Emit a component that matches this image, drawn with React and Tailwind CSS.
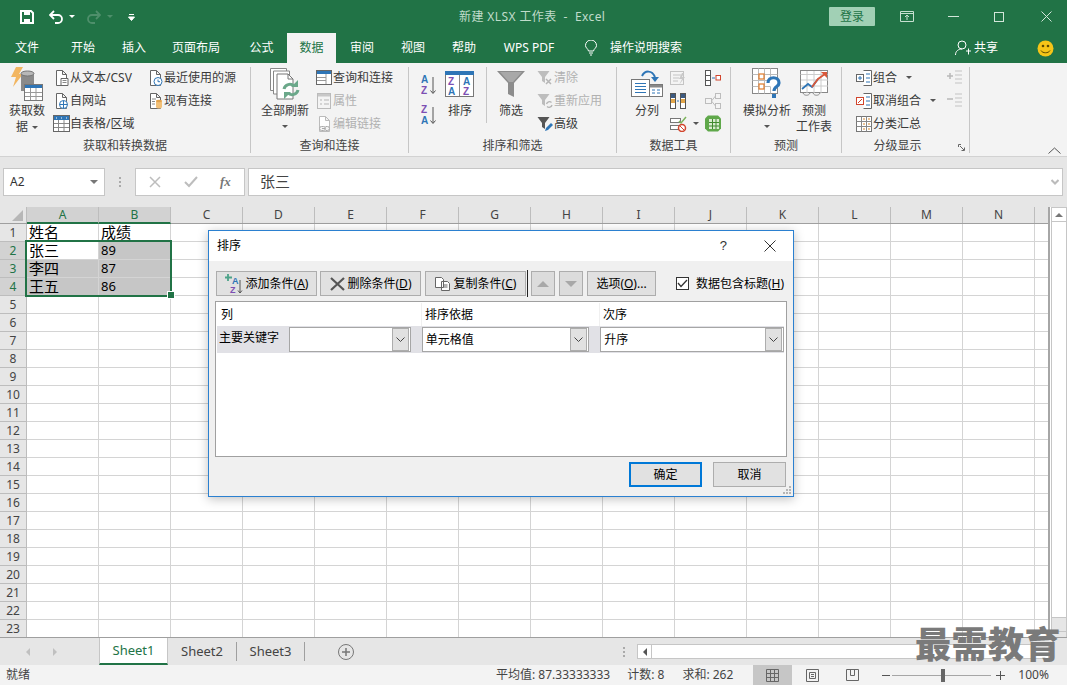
import React from 'react';

const cols = ['A', 'B', 'C', 'D', 'E', 'F', 'G', 'H', 'I', 'J', 'K', 'L', 'M', 'N'];
const rows = Array.from({ length: 23 }, (_, i) => i + 1);
const cellData = { '1A': '姓名', '1B': '成绩', '2A': '张三', '2B': '89', '3A': '李四', '3B': '87', '4A': '王五', '4B': '86' };

const Ico = ({ w = 16, h = 16, className = '', children }) => (
    <svg width={w} height={h} viewBox={`0 0 ${w} ${h}`} fill="none" className={`shrink-0 ${className}`}>{children}</svg>
);

// small ribbon caret
const Caret = ({ className = 'border-t-[#555]' }) => <span className={`inline-block w-0 h-0 border-x-[3px] border-x-transparent border-t-[3px] ${className}`} />;

const PageBase = ({ c = '#666' }) => <path d="M3.5 .5h6l4 4v11h-10z M9.5 .5v4h4" stroke={c} fill="#fff" />;

const IcoText = () => <Ico><PageBase /><path d="M8 8.5h7v7H8z" fill="#fff" stroke="#666" /><path d="M9.5 10.5h4M9.5 12.5h4" stroke="#888" /></Ico>;
const IcoWeb = () => <Ico><PageBase /><circle cx="10.5" cy="11.5" r="4" fill="#fff" stroke="#2e75b6" /><path d="M6.5 11.5h8M10.5 7.5v8" stroke="#2e75b6" /></Ico>;
const IcoTable = () => <Ico w={17} h={17}><rect x=".5" y=".5" width="16" height="16" fill="#fff" stroke="#666" /><rect x="1" y="1" width="15" height="4" fill="#2e75b6" /><path d="M1 8.5h15M1 12.5h15M5.5 5v11M11 5v11" stroke="#888" /><path d="M3 3h1M8 3h1M13 3h1" stroke="#fff" /></Ico>;
const IcoRecent = () => <Ico><PageBase /><circle cx="11" cy="11.5" r="4" fill="#fff" stroke="#2e75b6" /><path d="M11 9.5v2.2h2" stroke="#2e75b6" /></Ico>;
const IcoExisting = () => <Ico><PageBase /><path d="M5 6h4M5 8.500h3M5 11h3" stroke="#888" /><rect x="9" y="7" width="6" height="8.500" rx="2" fill="#f2c078" /><ellipse cx="12" cy="8" rx="3" ry="1.200" fill="#e2a24c" /></Ico>;
const IcoQuery = () => <Ico w={17} h={16}><rect x=".5" y=".5" width="15" height="14" fill="#fff" stroke="#666" /><rect x="1" y="1" width="14" height="3" fill="#2e75b6" /><path d="M1 7.500h9M1 10.500h9M10 4v10" stroke="#999" /></Ico>;
const IcoProps = () => <Ico><rect x="1.500" y=".5" width="13" height="15" fill="#f4f4f4" stroke="#bbb" /><rect x="2" y="1" width="12" height="2.500" fill="#c8c8c8" /><path d="M4 7h2M8 7h5M4 11h2M8 11h5" stroke="#b5b5b5" /></Ico>;
const IcoLink = () => <Ico><PageBase c="#bbb" /><path d="M6 12.500h3M5.500 10.500h2a2 2 0 010 4h-2a2 2 0 010-4zM9.500 10.500h2a2 2 0 010 4h-2" stroke="#aaa" fill="#f4f4f4" /></Ico>;
const IcoFunnel = ({ c = '#bdbdbd' }) => <path d="M.5 1h12L8 7v6L5 11V7z" fill={c} />;
const IcoClear = () => <Ico w={17}><IcoFunnel /><path d="M9 9l5 5M14 9l-5 5" stroke="#b5b5b5" strokeWidth="1.500" /></Ico>;
const IcoReapply = () => <Ico w={17}><IcoFunnel /><path d="M9.500 11a3 3 0 015-1.500M15 12a3 3 0 01-5 1.500" stroke="#b5b5b5" strokeWidth="1.300" /></Ico>;
const IcoAdvanced = () => <Ico w={17}><IcoFunnel c="#555" /><path d="M8 15l1-3 5-5 2 2-5 5z" fill="#2e75b6" /></Ico>;

const IcoData = () => (
    <svg width="34" height="34" viewBox="0 0 34 34" fill="none" className="shrink-0">
        <path d="M6 0h7L9 7h4L3 20l3-10H1z" fill="#f2b661" />
        <path d="M11 6.500c0-2.500 13-2.500 13 0V24H11z" fill="#8a8a8a" />
        <ellipse cx="17.500" cy="6.500" rx="6.500" ry="2.500" fill="#b8b8b8" stroke="#777" />
        <rect x="14.500" y="17.500" width="18" height="16" fill="#fff" stroke="#777" />
        <rect x="15" y="18" width="17" height="3" fill="#2e75b6" />
        <path d="M15 25.500h17M15 29.500h17M20.500 21v12M26 21v12" stroke="#999" />
    </svg>
);
const IcoRefresh = () => (
    <svg width="30" height="32" viewBox="0 0 30 32" fill="none" className="shrink-0">
        <path d="M.5 .5h16v22H.5z" fill="#fff" stroke="#888" />
        <path d="M3.500 3h16v23h-16z" fill="#fff" stroke="#888" />
        <path d="M7 6h11l5 5v20H7z" fill="#fff" stroke="#777" />
        <path d="M18 6v5h5" stroke="#777" />
        <path d="M14 21a6 6 0 0110-3M28 22a6 6 0 01-10 3" stroke="#6ba88a" strokeWidth="3" />
        <path d="M28 12v7h-7zM14 31v-7h7z" fill="#6ba88a" />
    </svg>
);
const AZ = ({ up }) => (
    <svg width="16" height="22" viewBox="0 0 16 22" fill="none" className="shrink-0">
        <text x="0" y="9" fontSize="10" fontWeight="700" fontFamily="Liberation Sans" fill={up ? '#2e75b6' : '#7d4fb3'}>{up ? 'A' : 'Z'}</text>
        <text x="0" y="20" fontSize="10" fontWeight="700" fontFamily="Liberation Sans" fill={up ? '#7d4fb3' : '#2e75b6'}>{up ? 'Z' : 'A'}</text>
        <path d="M12 3v16M9.500 16.500L12 19.500l2.500-3" stroke="#555" />
    </svg>
);
const IcoSort = () => (
    <svg width="30" height="26" viewBox="0 0 30 26" fill="none" className="shrink-0">
        <rect x=".5" y=".5" width="28" height="25" fill="#fff" stroke="#777" />
        <rect x="0" y="0" width="29" height="4" fill="#2e75b6" />
        <path d="M14.500 4v21" stroke="#888" />
        <text x="3" y="14" fontSize="10" fontWeight="700" fontFamily="Liberation Sans" fill="#7d4fb3">Z</text>
        <text x="3" y="24" fontSize="10" fontWeight="700" fontFamily="Liberation Sans" fill="#2e75b6">A</text>
        <text x="18" y="14" fontSize="10" fontWeight="700" fontFamily="Liberation Sans" fill="#2e75b6">A</text>
        <text x="18" y="24" fontSize="10" fontWeight="700" fontFamily="Liberation Sans" fill="#7d4fb3">Z</text>
    </svg>
);
const IcoFilter = () => (
    <svg width="28" height="26" viewBox="0 0 28 26" fill="none" className="shrink-0">
        <path d="M0 0h28L17 12v14l-6-3V12z" fill="#8c8c8c" />
        <path d="M3 1h22l-9 10h-4z" fill="#a8a8a8" />
    </svg>
);
const IcoColumns = () => (
    <svg width="32" height="27" viewBox="0 0 32 27" fill="none" className="shrink-0">
        <rect x=".5" y="9.500" width="18" height="17" fill="#fff" stroke="#777" />
        <path d="M4 13.500h11M4 16.500h11M4 19.500h11M4 22.500h11" stroke="#2e75b6" />
        <rect x="18.500" y="14.500" width="13" height="12" fill="#fff" stroke="#777" />
        <rect x="19" y="15" width="12" height="2.500" fill="#888" />
        <path d="M21 20h3M26 20h3M21 23h3M26 23h3" stroke="#2e75b6" />
        <path d="M11 6c3-6 10-6 13 1" stroke="#2e75b6" strokeWidth="2" />
        <path d="M20 7h8l-4 5z" fill="#2e75b6" />
    </svg>
);
const IcoFlash = () => <Ico><rect x=".5" y="1.500" width="13" height="13" fill="#f4f4f4" stroke="#c4c4c4" /><path d="M3 5h8M3 8h6M3 11h5" stroke="#c4c4c4" /><path d="M12 3l-3 6h3l-3 6 6-8h-3l2-4z" fill="#c8c8c8" /></Ico>;
const IcoRemoveDup = () => <Ico><rect x=".5" y=".5" width="5" height="15" fill="#fff" stroke="#555" /><rect x="1" y="1" width="4" height="4" fill="#3d5a80" /><rect x="1" y="6" width="4" height="4" fill="#e2a64a" /><rect x="10.500" y=".5" width="5" height="15" fill="#fff" stroke="#555" /><rect x="11" y="1" width="4" height="4" fill="#3d5a80" /><rect x="11" y="6" width="4" height="4" fill="#e2a64a" /><path d="M7 8h2" stroke="#2e75b6" /></Ico>;
const IcoValidate = () => <Ico w={17}><rect x=".5" y="2.500" width="10" height="4" fill="#fff" stroke="#777" /><rect x=".5" y="9.500" width="10" height="4" fill="#fff" stroke="#777" /><path d="M9 5l2 2 5-6" stroke="#7bb35b" strokeWidth="1.500" /><circle cx="12" cy="12" r="3.500" fill="#fff" stroke="#d1442c" strokeWidth="1.500" /><path d="M10 10l4 4" stroke="#d1442c" /></Ico>;
const IcoConsol = () => <Ico><rect x=".5" y=".5" width="5" height="15" fill="#fff" stroke="#555" /><path d="M1 5.500h4M1 10.500h4" stroke="#555" /><path d="M7 8h3" stroke="#2e75b6" /><rect x="11" y="5.500" width="4.500" height="4.500" fill="#fff" stroke="#d1442c" /></Ico>;
const IcoRelation = () => <Ico><rect x=".5" y="5.500" width="6" height="5" fill="#f4f4f4" stroke="#bdbdbd" /><rect x="10.500" y=".5" width="5" height="5" fill="#f4f4f4" stroke="#bdbdbd" /><rect x="10.500" y="10.500" width="5" height="5" fill="#f4f4f4" stroke="#bdbdbd" /><path d="M6.500 8l4-5M6.500 8l4 5" stroke="#bdbdbd" /></Ico>;
const IcoPivot = () => <Ico h={17}><path d="M3 .5h10l3 3v10l-3 3H3l-3-3v-10z" fill="#5fa84a" /><rect x="4" y="4" width="10" height="10" fill="#d9ecd0" /><path d="M7.500 4v10M11 4v10M4 7.500h10M4 11h10" stroke="#3f8a2e" /></Ico>;
const IcoWhatIf = () => (
    <svg width="31" height="31" viewBox="0 0 31 31" fill="none" className="shrink-0">
        <rect x=".5" y=".5" width="25" height="25" fill="#fff" stroke="#888" />
        <path d="M.5 6.500h25M.5 12.500h25M.5 18.500h25M6.500 .5v25M12.500 .5v25M18.500 .5v25" stroke="#bbb" />
        <rect x="7" y="6" width="5" height="5" fill="#fff" stroke="#e07b2a" strokeWidth="1.200" />
        <rect x="7" y="16" width="5" height="5" fill="#fff" stroke="#e07b2a" strokeWidth="1.200" />
        <path d="M16 15c0-7 11-7 11 0 0 4-5 3-5 8" stroke="#2e75b6" strokeWidth="3.200" fill="#fff" />
        <rect x="20" y="26" width="4" height="4" fill="#2e75b6" />
    </svg>
);
const IcoForecast = () => (
    <svg width="29" height="27" viewBox="0 0 29 27" fill="none" className="shrink-0">
        <rect x=".5" y=".5" width="27" height="22" fill="#fff" stroke="#888" />
        <path d="M.5 4.500h27M7 1v22M14 1v22M21 1v22M1 10h27M1 16h27" stroke="#ccc" />
        <path d="M2 19l6-5 4 3 6-8" stroke="#2e75b6" strokeWidth="1.800" />
        <path d="M12 17l6-8 7-5" stroke="#d9583a" strokeWidth="1.800" />
        <path d="M21 2h6v6z" fill="#d9583a" />
        <path d="M3 23c1 3 6 3 7 0M13 23c1 3 6 3 7 0" stroke="#888" />
    </svg>
);
const IcoOutline = ({ red, sub }) => (
    <Ico w={17} h={16}>
        {sub ? (
            <>
                <rect x=".5" y=".5" width="15" height="15" fill="#fff" stroke="#777" />
                <path d="M5.500 .5v15M10.500 .5v15M.5 5.500h15M.5 10.500h15" stroke="#888" />
                <path d="M7 3h2M12 3h2M7 8h2M12 8h2M7 13h2M12 13h2" stroke="#d9882a" />
            </>
        ) : (
            <>
                <path d="M7.500 .5h8v15h-8" stroke="#666" fill="#fff" />
                <rect x=".5" y="4.500" width="7" height="7" fill="#fff" stroke={red ? '#d1442c' : '#666'} />
                <path d={red ? 'M2 10l4-4' : 'M2 8h4M4 6v4'} stroke={red ? '#d1442c' : '#2e75b6'} />
                <path d="M10 4h4M10 8h4M10 12h4" stroke="#2e75b6" />
            </>
        )}
    </Ico>
);
const IcoShow = ({ minus }) => (
    <Ico w={15}>
        <path d={minus ? 'M0 6h6' : 'M0 6h6M3 3v6'} stroke="#b9b9b9" strokeWidth="1.500" />
        <path d="M8 1h7M8 5h7M8 9h7M8 13h7" stroke="#c3c3c3" />
    </Ico>
);

// one small ribbon command
const Cmd = ({ icon, label, disabled, tail }) => (
    <div className={`flex items-center h-[23px] whitespace-nowrap ${disabled ? 'text-[#b1b1b1]' : 'text-[#3a3a3a]'}`}>
        <span className="w-[18px] flex justify-center">{icon}</span>
        {label && <span>{label}</span>}
        {tail}
    </div>
);

const Big = ({ icon, lines, caret, className = '' }) => (
    <div className={`flex flex-col items-center text-[#3a3a3a] whitespace-nowrap ${className}`}>
        <div className="h-[33px] flex items-center justify-center">{icon}</div>
        <div className="mt-[3px] leading-[16px] text-center">
            {lines.map((l, i) => <div key={i}>{l}</div>)}
            {caret && <div className="flex justify-center items-center h-[14px]"><Caret /></div>}
        </div>
    </div>
);

const Group = ({ width, label, children, extra }) => (
    <div className={`relative flex flex-col border-r border-[#c6c6c6] mt-[4px] mb-[3px] ${width}`}>
        <div className="flex h-[72px] shrink-0">{children}</div>
        <div className="h-[15px] shrink-0 mt-[-1px] flex items-center justify-center text-[#444]">{label}</div>
        {extra}
    </div>
);

const CmdCol = ({ className = '', children }) => <div className={`flex flex-col mt-[-1px] ${className}`}>{children}</div>;

const TitleBar = () => (
    <div className="relative flex items-center h-[33px] text-white">
        <div className="flex items-center pl-[20px]">
            <svg width="14" height="14" viewBox="0 0 14 14" fill="none">
                <path d="M1 1h10l2 2v10H1z" stroke="#fff" strokeWidth="2" />
                <path d="M4 1h6v4H4zM4 9h6v4H4z" fill="#fff" />
            </svg>
            <svg width="15" height="14" viewBox="0 0 15 14" fill="none" className="ml-[15px]">
                <path d="M1 5h8a4 4 0 010 8H6" stroke="#fff" strokeWidth="1.800" />
                <path d="M5 1L1 5l4 4" stroke="#fff" strokeWidth="1.800" />
            </svg>
            <Caret className="ml-[5px] border-t-white" />
            <svg width="15" height="14" viewBox="0 0 15 14" fill="none" className="ml-[11px]">
                <path d="M14 5H6a4 4 0 000 8h3M10 1l4 4-4 4" stroke="#4e8f6b" strokeWidth="1.800" />
            </svg>
            <Caret className="ml-[6px] border-t-[#4e8f6b]" />
            <svg width="7" height="8" viewBox="0 0 7 8" fill="none" className="ml-[15px]">
                <path d="M1 1.500h5M.5 4h6L3.500 7.500z" stroke="#fff" strokeWidth="1" fill="#fff" />
            </svg>
        </div>
        <div className="absolute left-[459px] text-[12px] text-[#c0dccb] tracking-[.4px]">新建 XLSX 工作表&nbsp; -&nbsp; Excel</div>
        <div className="ml-auto flex items-center">
            <div className="w-[46px] h-[19px] flex items-center justify-center bg-[#a1d0b5] rounded-[1px] text-[#217346] text-[12px] mr-[25px]">登录</div>
            <svg width="14" height="11" viewBox="0 0 14 11" fill="none" className="mr-[34px]" stroke="#c7e0d1">
                <path d="M.5 .5h13v10H.5zM.5 2.500h13M7 9V4.500M5 6l2-2 2 2" />
            </svg>
            <div className="w-[11px] h-[1px] bg-[#d3e6da] mr-[35px]" />
            <div className="w-[10px] h-[10px] border border-[#d3e6da] mr-[37px]" />
            <svg width="11" height="11" viewBox="0 0 11 11" className="mr-[15px]" stroke="#d3e6da"><path d="M.5 .5l10 10M10.500 .5l-10 10" /></svg>
        </div>
    </div>
);

const tabs = [['文件', 54], ['开始', 58], ['插入', 44], ['页面布局', 80], ['公式', 51], ['数据', 49], ['审阅', 52], ['视图', 50], ['帮助', 52], ['WPS PDF', 78]];

const TabBar = () => (
    <div className="flex h-[30px] text-[12px] text-white">
        {tabs.map(([t, w]) => (
            <div key={t} style={{ width: w }} className={`flex items-center justify-center ${t === '数据' ? 'bg-[#f3f3f3] text-[#217346]' : ''}`}>{t}</div>
        ))}
        <div className="flex items-center ml-[17px]">
            <svg width="12" height="16" viewBox="0 0 12 16" fill="none" stroke="#fff"><path d="M3.500 11C3 8.500 .5 8 .5 5.500a5.500 5.500 0 0111 0C11.500 8 9 8.500 8.500 11zM4 13h4M5 15h2" /></svg>
            <span className="ml-[13px]">操作说明搜索</span>
        </div>
        <div className="ml-auto flex items-center">
            <svg width="16" height="16" viewBox="0 0 16 16" fill="none" stroke="#fff"><circle cx="7" cy="5" r="4" /><path d="M.5 15c0-4 3-6 6.500-6M11 11h5M13.500 8.500v6" /></svg>
            <span className="ml-[3px] mr-[39px]">共享</span>
            <svg width="17" height="17" viewBox="0 0 17 17" className="mr-[13px]"><circle cx="8.500" cy="8.500" r="8" fill="#f5c518" /><circle cx="6" cy="6" r="1.300" fill="#5a4a00" /><circle cx="11" cy="6" r="1.300" fill="#5a4a00" /><path d="M4 10.500c1.500 3 7.500 3 9 0" stroke="#5a4a00" fill="none" /></svg>
        </div>
    </div>
);

const Ribbon = () => (
    <div className="relative flex h-[94px] bg-[#f3f3f3] border-b border-[#d2d2d2] text-[12px]">
        <Group width="w-[251px]" label="获取和转换数据">
            <Big icon={<IcoData />} lines={['获取数', <span className="flex items-center justify-center gap-[4px]">据<Caret /></span>]} className="w-[52px] ml-[1px] mr-[-1px]" />
            <CmdCol className="w-[84px]">
                <Cmd icon={<IcoText />} label="从文本/CSV" />
                <Cmd icon={<IcoWeb />} label="自网站" />
                <Cmd icon={<IcoTable />} label="自表格/区域" />
            </CmdCol>
            <CmdCol className="ml-[10px]">
                <Cmd icon={<IcoRecent />} label="最近使用的源" />
                <Cmd icon={<IcoExisting />} label="现有连接" />
            </CmdCol>
        </Group>
        <Group width="w-[158px]" label="查询和连接">
            <Big icon={<IcoRefresh />} lines={['全部刷新']} caret className="w-[68px]" />
            <CmdCol className="ml-[-4px]">
                <Cmd icon={<IcoQuery />} label="查询和连接" />
                <Cmd icon={<IcoProps />} label="属性" disabled />
                <Cmd icon={<IcoLink />} label="编辑链接" disabled />
            </CmdCol>
        </Group>
        <Group width="w-[208px]" label="排序和筛选">
            <div className="flex flex-col gap-[8px] pl-[12px] pt-[7px]"><AZ up /><AZ /></div>
            <Big icon={<IcoSort />} lines={['排序']} className="w-[30px] ml-[8px]" />
            <div className="w-px h-[56px] bg-[#c6c6c6] ml-[11px]" />
            <Big icon={<IcoFilter />} lines={['筛选']} className="w-[28px] ml-[10px]" />
            <CmdCol className="ml-[11px]">
                <Cmd icon={<IcoClear />} label="清除" disabled />
                <Cmd icon={<IcoReapply />} label="重新应用" disabled />
                <Cmd icon={<IcoAdvanced />} label="高级" />
            </CmdCol>
        </Group>
        <Group width="w-[114px]" label="数据工具">
            <Big icon={<IcoColumns />} lines={['分列']} className="w-[32px] ml-[14px]" />
            <CmdCol className="ml-[6px] w-[35px]">
                <Cmd icon={<IcoFlash />} />
                <Cmd icon={<IcoRemoveDup />} />
                <Cmd icon={<IcoValidate />} tail={<Caret className="ml-[6px] border-t-[#555]" />} />
            </CmdCol>
            <CmdCol>
                <Cmd icon={<IcoConsol />} />
                <Cmd icon={<IcoRelation />} />
                <Cmd icon={<IcoPivot />} />
            </CmdCol>
        </Group>
        <Group width="w-[111px]" label="预测">
            <Big icon={<IcoWhatIf />} lines={['模拟分析']} caret className="w-[50px] ml-[11px]" />
            <Big icon={<IcoForecast />} lines={['预测', '工作表']} className="w-[36px] ml-[4px]" />
        </Group>
        <Group
            width="w-[128px]"
            label={<span className="mr-[16px]">分级显示</span>}
            extra={(
                <svg width="7" height="7" viewBox="0 0 7 7" className="absolute right-[4px] bottom-[2px]" fill="none" stroke="#666">
                    <path d="M.5 3V.5H3M2 2l4 4M6.500 3.500v3h-3" />
                </svg>
            )}
        >
            <CmdCol className="pl-[13px] w-[103px]">
                <Cmd icon={<IcoOutline />} label="组合" tail={<Caret className="ml-[9px] border-t-[#555]" />} />
                <Cmd icon={<IcoOutline red />} label="取消组合" tail={<Caret className="ml-[9px] border-t-[#555]" />} />
                <Cmd icon={<IcoOutline sub />} label="分类汇总" />
            </CmdCol>
            <CmdCol>
                <Cmd icon={<IcoShow />} />
                <Cmd icon={<IcoShow minus />} />
            </CmdCol>
        </Group>
        <svg width="13" height="7" viewBox="0 0 13 7" fill="none" stroke="#555" className="absolute right-[6px] bottom-[2px]"><path d="M.5 6.500l6-5.500 6 5.500" /></svg>
    </div>
);

const FormulaBar = () => (
    <div className="flex items-center h-[28px] mt-[11px] mb-[11px] pl-[3px] pr-[4px]">
        <div className="w-[102px] h-full bg-white border border-[#c6c6c6] flex items-center justify-between pl-[6px] pr-[6px] text-[12px] text-[#333]">
            A2
            <span className="w-0 h-0 border-x-[4px] border-x-transparent border-t-[4px] border-t-[#777]" />
        </div>
        <div className="w-[30px] flex flex-col items-center gap-[2px]">
            <span className="w-[2px] h-[2px] bg-[#aaa]" /><span className="w-[2px] h-[2px] bg-[#aaa]" /><span className="w-[2px] h-[2px] bg-[#aaa]" />
        </div>
        <div className="w-[110px] h-full bg-white border border-[#c6c6c6] flex items-center pl-[13px]">
            <svg width="12" height="12" viewBox="0 0 12 12" stroke="#bdbdbd" strokeWidth="1.500"><path d="M1 1l10 10M11 1L1 11" /></svg>
            <svg width="14" height="12" viewBox="0 0 14 12" stroke="#bdbdbd" strokeWidth="2" fill="none" className="ml-[23px]"><path d="M1 6l4 4 8-9" /></svg>
            <span className="ml-[22px] font-['Liberation_Serif',serif] italic font-bold text-[13px] text-[#777]">fx</span>
        </div>
        <div className="ml-[3px] flex-1 h-full bg-white border border-[#c6c6c6] flex items-center justify-between pl-[11px] pr-[3px] text-[15px] text-[#444]">
            <span className="mt-[-2px]">张三</span>
            <svg width="8" height="6" viewBox="0 0 8 6" fill="none" stroke="#bbb" strokeWidth="2"><path d="M.5 1L4 4.500 7.500 1" /></svg>
        </div>
    </div>
);

const isSel = (r, c) => r >= 2 && r <= 4 && (c === 'A' || c === 'B');

const Sheet = () => (
    <div className="relative flex h-[430px] bg-white">
        <div className="w-[1048px]">
            <div className="flex h-[17px] bg-[#e6e6e6] border-b border-[#9f9f9f] text-[12px] text-[#444]">
                <div className="relative w-[27px] border-r border-[#bdbdbd]">
                    <span className="absolute right-[3px] bottom-[2px] w-0 h-0 border-l-[11px] border-l-transparent border-b-[11px] border-b-[#b7b7b7]" />
                </div>
                {cols.map((c) => (
                    <div key={c} className={`w-[72px] flex items-center justify-center border-r border-[#bdbdbd] ${c === 'A' || c === 'B' ? 'bg-[#d2d2d2] text-[#217346] border-b-2 border-b-[#217346] h-[17px]' : ''}`}>{c}</div>
                ))}
            </div>
            {rows.map((r) => (
                <div key={r} className="flex h-[18px]">
                    <div className={`w-[27px] flex items-center justify-center border-r border-b border-[#bdbdbd] text-[12px] ${r >= 2 && r <= 4 ? 'bg-[#d2d2d2] text-[#217346]' : 'bg-[#e6e6e6] text-[#444]'}`}>{r}</div>
                    {cols.map((c) => {
                        const v = cellData[`${r}${c}`];
                        return (
                            <div
                                key={c}
                                className={`w-[72px] pl-[2px] flex items-center border-r border-b border-[#d4d4d4] text-black leading-[17px] ${/\d/.test(v || '') ? 'text-[13px]' : 'text-[15px]'} ${isSel(r, c) && !(r === 2 && c === 'A') ? 'bg-[#c6c6c6]' : ''}`}
                            >
                                {v}
                            </div>
                        );
                    })}
                    <div className="flex-1 border-b border-[#d4d4d4]" />
                </div>
            ))}
            <div className="absolute left-[25px] top-[33px] w-[147px] h-[57px] border-2 border-[#217346]" />
            <div className="absolute left-[167px] top-[84px] w-[6px] h-[6px] bg-[#217346] border border-white box-content" />
        </div>
        <div className="w-[2px] bg-[#a6a6a6]" />
        <div className="ml-[1px] w-[16px] bg-[#e6e6e6] flex flex-col items-center border-x border-[#c6c6c6]">
            <div className="w-full h-[15px] bg-white border-y border-[#c6c6c6] flex items-center justify-center">
                <span className="w-0 h-0 border-x-[4px] border-x-transparent border-b-[4px] border-b-[#777]" />
            </div>
            <div className="w-full h-[395px] bg-white" />
            <div className="w-full h-[15px] bg-[#e6e6e6] border-y border-[#c6c6c6]" />
        </div>
    </div>
);

const DlgBtn = ({ className = 'bg-[#e1e1e1] border border-[#adadad]', width = '', children }) => (
    <div className={`h-[25px] flex items-center justify-center whitespace-nowrap ${width} ${className}`}>{children}</div>
);

const Combo = ({ className = '', value }) => (
    <div className={`h-[25px] bg-white border border-[#a6a6a6] flex items-center pl-[3px] text-[12px] text-black ${className}`}>
        {value}
        <span className="ml-auto w-[17px] h-[23px] bg-[#e1e1e1] border border-[#adadad] flex items-center justify-center mr-[1px]">
            <svg width="9" height="5" viewBox="0 0 9 5" fill="none" stroke="#444"><path d="M.5 .5l4 4 4-4" /></svg>
        </span>
    </div>
);

const SortDialog = () => (
    <div className="absolute left-[208px] top-[230px] w-[586px] h-[267px] border border-[#2b80d0] bg-[#f0f0f0] text-[12px] text-black shadow-[0_2px_10px_rgba(0,0,0,0.25)]">
        <div className="h-[30px] bg-white flex items-center pl-[8px]">
            排序
            <span className="ml-auto mr-[37px] font-['Liberation_Sans',sans-serif] text-[13px] text-[#333]">?</span>
            <svg width="12" height="12" viewBox="0 0 12 12" stroke="#333" className="mr-[17px]"><path d="M.5 .5l11 11M11.500 .5l-11 11" /></svg>
        </div>
        <div className="flex items-center h-[25px] mt-[10px] pl-[7px]">
            <DlgBtn width="w-[101px]">
                <svg width="20" height="20" viewBox="0 0 20 20" fill="none" className="mr-[1px]">
                    <path d="M3 0v7M0 3.500h7" stroke="#4da389" strokeWidth="1.800" />
                    <text x="7" y="10" fontSize="9" fontWeight="700" fontFamily="Liberation Sans" fill="#2e75b6">A</text>
                    <text x="5" y="19" fontSize="9" fontWeight="700" fontFamily="Liberation Sans" fill="#7d4fb3">Z</text>
                    <path d="M15 6v13M13 16.500l2 2.500 2-2.500" stroke="#555" />
                </svg>
                添加条件(<u>A</u>)
            </DlgBtn>
            <div className="ml-[3px]">
                <DlgBtn width="w-[101px]">
                    <svg width="15" height="14" viewBox="0 0 15 14" stroke="#555" strokeWidth="2.200" className="mr-[3px]"><path d="M1 1l13 12M14 1L1 13" /></svg>
                    删除条件(<u>D</u>)
                </DlgBtn>
            </div>
            <div className="ml-[4px]">
                <DlgBtn width="w-[101px]">
                    <svg width="16" height="14" viewBox="0 0 16 14" fill="#fff" stroke="#666" className="mr-[3px]"><path d="M.5 .5h6l2 2v8h-8z M6.500 4.500h6l2 2v7h-8z" /><path d="M8.500 8h4M8.500 10h4" /></svg>
                    复制条件(<u>C</u>)
                </DlgBtn>
            </div>
            <div className="w-px h-[27px] bg-[#222] ml-[1px]" />
            <div className="ml-[3px]">
                <DlgBtn width="w-[24px]" className="bg-[#dcdcdc] border border-[#adadad]"><span className="w-0 h-0 border-x-[6px] border-x-transparent border-b-[6px] border-b-[#a8a8a8]" /></DlgBtn>
            </div>
            <div className="ml-[4px]">
                <DlgBtn width="w-[24px]" className="bg-[#dcdcdc] border border-[#adadad]"><span className="w-0 h-0 border-x-[6px] border-x-transparent border-t-[6px] border-t-[#a8a8a8]" /></DlgBtn>
            </div>
            <div className="ml-[4px]">
                <DlgBtn width="w-[69px]">选项(<u>O</u>)...</DlgBtn>
            </div>
            <div className="flex items-center ml-[20px]">
                <span className="w-[13px] h-[13px] bg-white border border-[#333] flex items-center justify-center">
                    <svg width="11" height="9" viewBox="0 0 11 9" fill="none" stroke="#333" strokeWidth="1.300"><path d="M1 4l3 3.500L10 1" /></svg>
                </span>
                <span className="ml-[7px] whitespace-nowrap">数据包含标题(<u>H</u>)</span>
            </div>
        </div>
        <div className="mt-[5px] mx-[6px] h-[156px] bg-white border border-[#a0a0a0] pt-[1px] px-[1px]">
            <div className="flex h-[23px] items-center">
                <div className="w-[205px] pl-[4px] border-r border-[#f0f0f0] h-full flex items-center">列</div>
                <div className="w-[178px] pl-[3px] border-r border-[#f0f0f0] h-full flex items-center">排序依据</div>
                <div className="pl-[3px]">次序</div>
            </div>
            <div className="flex h-[27px] items-center bg-[#e1e1e6] pl-[2px] mr-[1px]">
                <span className="w-[70px] mb-[3px] whitespace-nowrap">主要关键字</span>
                <Combo className="w-[122px]" />
                <Combo className="w-[168px] ml-[11px]" value="单元格值" />
                <Combo className="w-[184px] ml-[11px]" value="升序" />
            </div>
        </div>
        <div className="flex justify-end mt-[5px] pr-[7px]">
            <DlgBtn width="w-[73px]" className="bg-[#e1e1e1] border-2 border-[#0078d7]">确定</DlgBtn>
            <div className="ml-[11px]">
                <DlgBtn width="w-[73px]">取消</DlgBtn>
            </div>
        </div>
        <svg width="9" height="9" viewBox="0 0 9 9" className="absolute right-[1px] bottom-[1px]" fill="#b5b5b5">
            <rect x="6" y="0" width="2" height="2" /><rect x="3" y="3" width="2" height="2" /><rect x="6" y="3" width="2" height="2" />
            <rect x="0" y="6" width="2" height="2" /><rect x="3" y="6" width="2" height="2" /><rect x="6" y="6" width="2" height="2" />
        </svg>
    </div>
);

const SheetTabs = () => (
    <div className="relative flex items-center h-[28px] bg-[#e6e6e6] border-t border-[#9f9f9f] text-[13px] text-[#444]">
        <div className="w-[99px] flex items-center pl-[26px] gap-[23px]">
            <span className="w-0 h-0 border-y-[4px] border-y-transparent border-r-[4px] border-r-[#c0c0c0]" />
            <span className="w-0 h-0 border-y-[4px] border-y-transparent border-l-[4px] border-l-[#c0c0c0]" />
        </div>
        <div className="w-[69px] h-full flex items-center justify-center bg-white text-[#217346] border-b-2 border-b-[#217346] border-x border-x-[#c6c6c6]">Sheet1</div>
        <div className="w-[69px] h-[19px] flex items-center justify-center border-r border-[#9f9f9f]">Sheet2</div>
        <div className="w-[68px] h-[19px] flex items-center justify-center border-r border-[#9f9f9f]">Sheet3</div>
        <svg width="16" height="16" viewBox="0 0 16 16" fill="none" stroke="#777" className="ml-[33px]"><circle cx="8" cy="8" r="7.500" /><path d="M4 8h8M8 4v8" strokeWidth="1.500" /></svg>
        <div className="ml-[269px] flex flex-col gap-[2px]">
            <span className="w-[2px] h-[2px] bg-[#aaa]" /><span className="w-[2px] h-[2px] bg-[#aaa]" /><span className="w-[2px] h-[2px] bg-[#aaa]" />
        </div>
        <div className="ml-[12px] w-[412px] h-[15px] bg-white border border-[#c6c6c6] flex items-center">
            <div className="w-[14px] h-full border-r border-[#c6c6c6] flex items-center justify-center">
                <span className="w-0 h-0 border-y-[4px] border-y-transparent border-r-[4px] border-r-[#555]" />
            </div>
        </div>
    </div>
);

const StatusBar = () => (
    <div className="flex items-center h-[20px] bg-[#f3f3f3] text-[12px] text-[#444]">
        <span className="ml-[6px]">就绪</span>
        <span className="ml-[466px]">平均值: 87.33333333</span>
        <span className="ml-[17px]">计数: 8</span>
        <span className="ml-[18px]">求和: 262</span>
        <div className="ml-[20px] w-[39px] h-full bg-[#c6c6c6] flex items-center justify-center">
            <svg width="13" height="13" viewBox="0 0 13 13" fill="none" stroke="#666"><path d="M.5 .5h12v12H.5zM4.500 .5v12M8.500 .5v12M.5 4.500h12M.5 8.500h12" /></svg>
        </div>
        <div className="w-[40px] flex justify-center">
            <svg width="13" height="13" viewBox="0 0 13 13" fill="none" stroke="#666"><path d="M.5 .5h12v12H.5zM3.500 3.500h6v6h-6zM5 5.500h3M5 7.500h3" /></svg>
        </div>
        <div className="w-[40px] flex justify-center">
            <svg width="13" height="13" viewBox="0 0 13 13" fill="none" stroke="#666"><path d="M.5 .5h12v11H.5zM4.500 .5v6h4v-6" /></svg>
        </div>
        <span className="ml-[10px] w-[8px] h-px bg-[#555]" />
        <div className="relative ml-[2px] w-[99px] h-px bg-[#a6a6a6]">
            <span className="absolute left-[49px] top-[-6px] w-[4px] h-[13px] bg-[#666]" />
        </div>
        <svg width="9" height="9" viewBox="0 0 9 9" stroke="#555" className="ml-[5px]"><path d="M0 4.500h9M4.500 0v9" /></svg>
        <span className="ml-[13px]">100%</span>
    </div>
);

export default function App() {
    return (
        <div className="relative w-[1067px] h-[685px] overflow-hidden bg-[#e6e6e6] font-['Noto_Sans','Noto_Sans_CJK_SC',sans-serif]">
            <div className="bg-[#217346]">
                <TitleBar />
                <TabBar />
            </div>
            <Ribbon />
            <FormulaBar />
            <Sheet />
            <SheetTabs />
            <StatusBar />
            <SortDialog />
            <div className="absolute left-[915px] top-[627px] text-[36px] leading-[36px] font-black tracking-[.5px] text-[#7a7a7a] whitespace-nowrap">最需教育</div>
        </div>
    );
}
